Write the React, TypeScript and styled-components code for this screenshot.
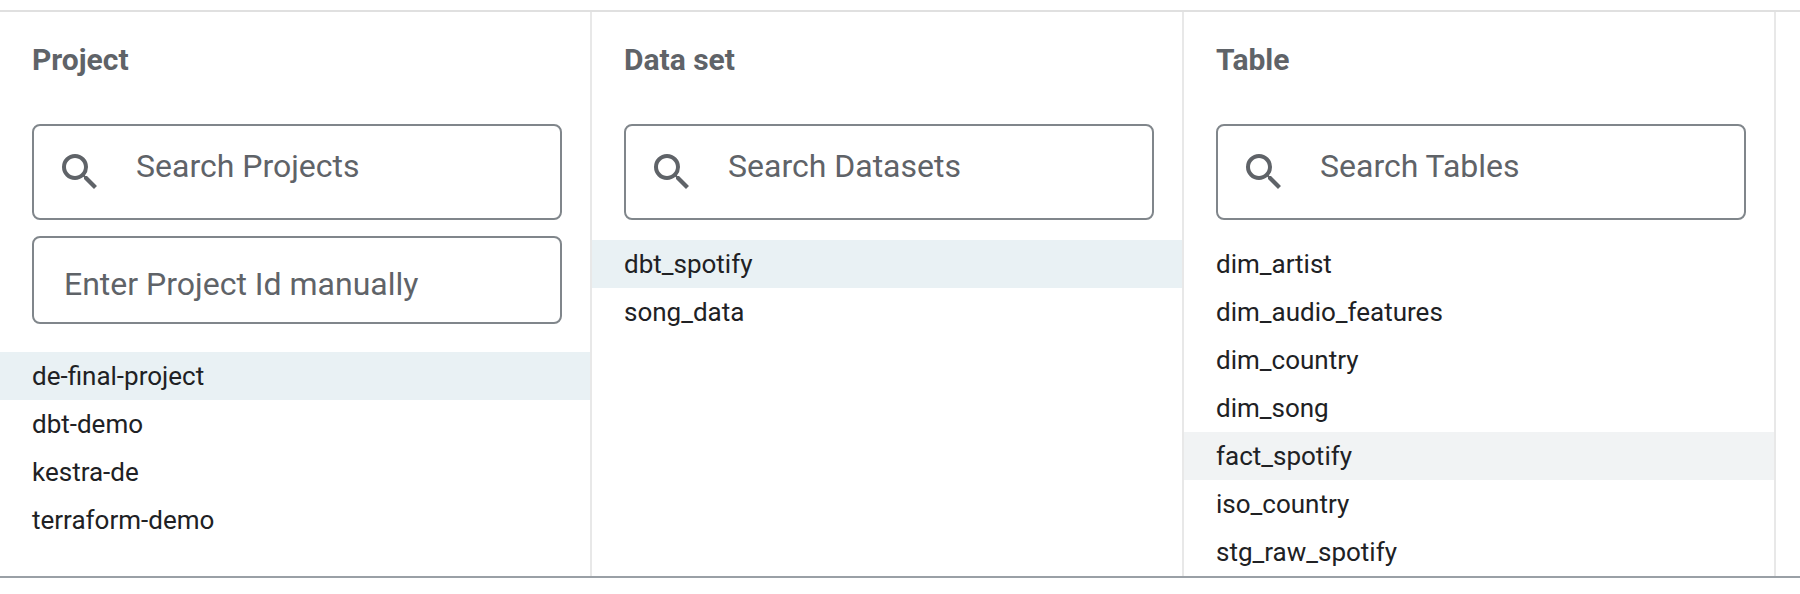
import React from "react";
import styled, { createGlobalStyle } from "styled-components";

const Global = createGlobalStyle`
  * { box-sizing: border-box; }
  body { margin: 0; background: #fff; font-family: Roboto, Arial, sans-serif; }
`;

const Page = styled.main`
  padding: 10px 0 16px;
`;

const Browser = styled.div`
  display: flex;
  padding-right: 24px;
  border-top: 2px solid #e0e0e0;
  border-bottom: 2px solid #9aa0a6;
`;

const Column = styled.section`
  flex: 1;
  min-width: 0;
  border-right: 2px solid #e8e8e8;
`;

const Title = styled.h2`
  margin: 0;
  padding: 28px 32px 0;
  font-size: 30px;
  line-height: 40px;
  font-weight: 700;
  color: #5f6368;
`;

const Fields = styled.div`
  display: flex;
  flex-direction: column;
  gap: 16px;
  padding: 44px 28px 0 32px;
`;

const SearchBox = styled.label`
  display: flex;
  align-items: center;
  height: 96px;
  padding-left: 22px;
  border: 2px solid #80868b;
  border-radius: 8px;
`;

const Icon = styled.svg`
  flex: none;
  width: 48px;
  height: 48px;
  fill: #5f6368;
`;

const SearchInput = styled.input`
  flex: 1;
  min-width: 0;
  height: 92px;
  margin: 0;
  padding: 0 16px 12px 32px;
  border: 0;
  outline: 0;
  background: transparent;
  font: 400 32px Roboto, Arial, sans-serif;
  color: #202124;
  &::placeholder { color: #5f6368; opacity: 1; }
`;

const ManualInput = styled.input`
  width: 100%;
  height: 88px;
  padding: 8px 30px 0;
  border: 2px solid #80868b;
  border-radius: 8px;
  outline: 0;
  font: 400 32px Roboto, Arial, sans-serif;
  color: #202124;
  &::placeholder { color: #5f6368; opacity: 1; }
`;

const List = styled.ul<{ $gap: number }>`
  list-style: none;
  margin: ${(p) => p.$gap}px 0 0;
  padding: 0;
`;

const Item = styled.button<{ $tone?: "selected" | "hover" }>`
  display: block;
  width: 100%;
  height: 48px;
  padding: 0 32px;
  border: 0;
  text-align: left;
  font: 400 26px Roboto, Arial, sans-serif;
  color: #202124;
  background: ${(p) => (p.$tone === "selected" ? "#e9f1f4" : p.$tone === "hover" ? "#f1f3f4" : "transparent")};
`;

type PanelProps = {
  title: string;
  placeholder: string;
  items: string[];
  selected?: string;
  hovered?: string;
  manual?: boolean;
};

function Panel({ title, placeholder, items, selected, hovered, manual }: PanelProps) {
  return (
    <Column>
      <Title>{title}</Title>
      <Fields>
        <SearchBox>
          <Icon viewBox="0 0 24 24" aria-hidden="true">
            <path d="M15.5 14h-.79l-.28-.27A6.471 6.471 0 0 0 16 9.5 6.5 6.5 0 1 0 9.5 16c1.61 0 3.09-.59 4.23-1.57l.27.28v.79l5 4.99L20.49 19l-4.99-5zm-6 0C7.01 14 5 11.99 5 9.5S7.01 5 9.5 5 14 7.01 14 9.5 11.99 14 9.5 14z" />
          </Icon>
          <SearchInput placeholder={placeholder} aria-label={placeholder} />
        </SearchBox>
        {manual && <ManualInput placeholder="Enter Project Id manually" aria-label="Enter Project Id manually" />}
      </Fields>
      <List $gap={manual ? 28 : 20}>
        {items.map((name) => (
          <li key={name}>
            <Item type="button" $tone={name === selected ? "selected" : name === hovered ? "hover" : undefined}>
              {name}
            </Item>
          </li>
        ))}
      </List>
    </Column>
  );
}

export default function App() {
  return (
    <Page>
      <Global />
      <Browser>
        <Panel
          title="Project"
          placeholder="Search Projects"
          manual
          items={["de-final-project", "dbt-demo", "kestra-de", "terraform-demo"]}
          selected="de-final-project"
        />
        <Panel
          title="Data set"
          placeholder="Search Datasets"
          items={["dbt_spotify", "song_data"]}
          selected="dbt_spotify"
        />
        <Panel
          title="Table"
          placeholder="Search Tables"
          items={["dim_artist", "dim_audio_features", "dim_country", "dim_song", "fact_spotify", "iso_country", "stg_raw_spotify"]}
          hovered="fact_spotify"
        />
      </Browser>
    </Page>
  );
}
